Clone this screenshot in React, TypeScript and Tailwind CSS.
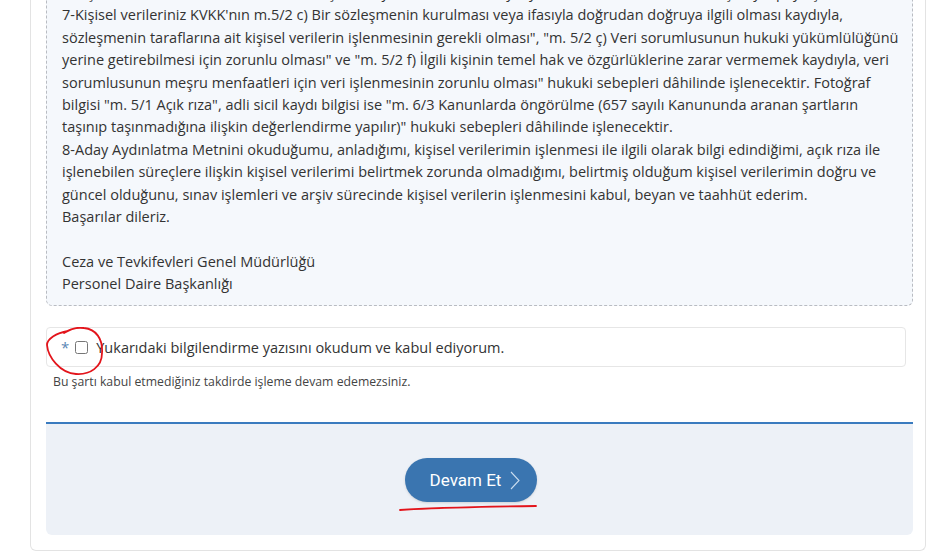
import type { ReactNode } from 'react';

const LINES: string[] = [
  '6-Kişisel verileriniz, sınav ve atama süreçlerinin yürütülmesi amacıyla yetkili kamu kurum ve kuruluşlarıyla paylaşılabilecektir.',
  "7-Kişisel verileriniz KVKK'nın m.5/2 c) Bir sözleşmenin kurulması veya ifasıyla doğrudan doğruya ilgili olması kaydıyla,",
  'sözleşmenin taraflarına ait kişisel verilerin işlenmesinin gerekli olması", "m. 5/2 ç) Veri sorumlusunun hukuki yükümlülüğünü',
  'yerine getirebilmesi için zorunlu olması" ve "m. 5/2 f) İlgili kişinin temel hak ve özgürlüklerine zarar vermemek kaydıyla, veri',
  'sorumlusunun meşru menfaatleri için veri işlenmesinin zorunlu olması" hukuki sebepleri dâhilinde işlenecektir. Fotoğraf',
  'bilgisi "m. 5/1 Açık rıza", adli sicil kaydı bilgisi ise "m. 6/3 Kanunlarda öngörülme (657 sayılı Kanununda aranan şartların',
  'taşınıp taşınmadığına ilişkin değerlendirme yapılır)" hukuki sebepleri dâhilinde işlenecektir.',
  '8-Aday Aydınlatma Metnini okuduğumu, anladığımı, kişisel verilerimin işlenmesi ile ilgili olarak bilgi edindiğimi, açık rıza ile',
  'işlenebilen süreçlere ilişkin kişisel verilerimi belirtmek zorunda olmadığımı, belirtmiş olduğum kişisel verilerimin doğru ve',
  'güncel olduğunu, sınav işlemleri ve arşiv sürecinde kişisel verilerin işlenmesini kabul, beyan ve taahhüt ederim.',
  'Başarılar dileriz.',
  '',
  'Ceza ve Tevkifevleri Genel Müdürlüğü',
  'Personel Daire Başkanlığı',
];

function Line({ children }: { children: ReactNode }) {
  return <div className="h-[22.4px] whitespace-nowrap">{children || '\u00a0'}</div>;
}

export default function App() {
  return (
    <div className="min-h-[557px] bg-white overflow-hidden font-['Open_Sans',sans-serif]">
      <div className="relative -mt-[29px] ml-[30px] w-[896px] border border-t-0 border-[#e3e3e3] rounded-b-md pl-[15px] pr-[12px] pb-[15px]">
        {/* Aydınlatma metni */}
        <div className="border border-dashed border-[#b9bcc2] rounded-md bg-[#f5f8fc] pl-[15px] pr-[14px] pt-[10px] pb-[10px] text-[14.5px] leading-[22.4px] text-[#333]">
          {LINES.map((l, i) => (
            <Line key={i}>{l}</Line>
          ))}
        </div>

        {/* Onay */}
        <div className="relative mt-[21px] mr-[7px] h-[40px] border border-[#e6e6e6] rounded flex items-center pl-[14px]">
          <span className="text-[#5b87b5] text-[15px] mr-[6px]">*</span>
          <input type="checkbox" className="w-[13px] h-[13px] mr-[8px] accent-[#3a75b0]" />
          <span className="text-[14.5px] text-[#333]">Yukarıdaki bilgilendirme yazısını okudum ve kabul ediyorum.</span>
          <svg className="absolute pointer-events-none" width="62" height="52" viewBox="0 0 62 52" style={{ left: -1, top: -1 }}>
            <path
              d="M22 4 C10 6 1 12 1 18 C2 30 14 46 30 47 C44 48 56 40 56 26 C57 12 50 2 38 1 C31 0 24 2 18 6"
              fill="none"
              stroke="#e3141b"
              strokeWidth="1.8"
              strokeLinecap="round"
            />
          </svg>
        </div>
        <div className="mt-[7px] pl-[7px] text-[12.25px] leading-[16px] text-[#444]">
          Bu şartı kabul etmediğiniz takdirde işleme devam edemezsiniz.
        </div>

        {/* Footer */}
        <div className="relative mt-[32px] border-t-2 border-[#3a7bbf] bg-[#edf1f7] rounded-b-md pt-[34px] pb-[33px] flex justify-center pr-[17px]">
          <button className="h-[44px] w-[132px] rounded-full bg-[#3a75b0] shadow-sm text-white text-[17px] font-['Roboto',sans-serif] flex items-center justify-center gap-[9px] pl-[8px]">
            <span>Devam Et</span>
            <svg width="10" height="19" viewBox="0 0 10 19">
              <polyline points="1,1 9,9.5 1,18" fill="none" stroke="#c9dcef" strokeWidth="1.1" />
            </svg>
          </button>
          <svg className="absolute pointer-events-none" style={{ left: 353, top: 80 }} width="140" height="10" viewBox="0 0 140 10">
            <path d="M1 6 C30 4 70 3 137 2" fill="none" stroke="#e3141b" strokeWidth="1.8" strokeLinecap="round" />
          </svg>
        </div>
      </div>
    </div>
  );
}
